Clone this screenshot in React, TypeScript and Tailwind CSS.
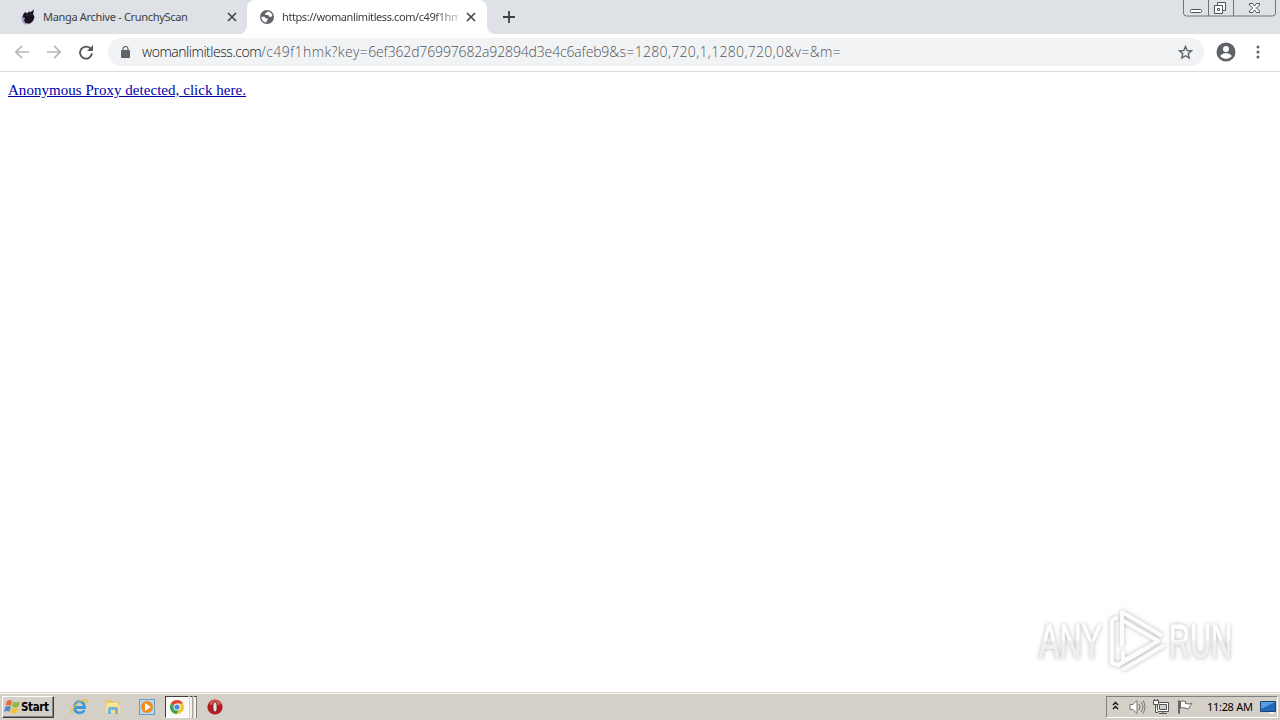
import React from 'react';

const CloseIcon: React.FC = () => (
  <svg width="10" height="10" viewBox="0 0 10 10" fill="none" stroke="#45484c" strokeWidth="1.7">
    <path d="M1 1l8 8M9 1L1 9" />
  </svg>
);

const MangaIcon: React.FC = () => (
  <svg width="16" height="16" viewBox="0 0 16 16">
    <path d="M2.500 6L4 3.500 7 4l2-2 1 1.500L13.500 1 13 5l1.500 3-1.500 4-3.500 3-4 .5-3-2-1-4z" fill="#a99ac8" />
    <path d="M3.500 5.500L5 3l2 1.500L10 2l-.5 2L14 .500 13 5l1.500 3-1.500 4-3 2.500-4.500-.5L4 11.500 5 9 2.500 8z" fill="#17131f" />
    <path d="M6 6l2 .5M9.500 6l2-.5" stroke="#4d4460" strokeWidth=".8" />
  </svg>
);

const GlobeIcon: React.FC = () => (
  <svg width="14" height="14" viewBox="0 0 14 14">
    <circle cx="7" cy="7" r="7" fill="#5f6368" />
    <path
      d="M1.5 6.7l3 .1 1.1 1.4 2 .2.3 1.4-1.3 1.1.1 1.4C3.5 12.5 1.2 9.8 1.5 6.7zM7.1 1.6L6.4 3 4.8 3.8l.4 1.2 3 .1.8 1.5 1.4.3 1.9-.8C12.3 3.7 10 1.4 7.1 1.6z"
      fill="#fff"
    />
  </svg>
);

const Tabs: React.FC = () => (
  <div className="flex h-[34px] bg-[#dee1e6] font-['Noto_Sans',sans-serif] text-[11px] text-[#3c4043]">
    <div className="flex w-[247px] items-center pl-5">
      <MangaIcon />
      <span className="ml-[7px] w-[184px] whitespace-nowrap tracking-[-0.32px]">Manga Archive - CrunchyScan</span>
      <CloseIcon />
    </div>
    <div className="relative flex w-60 items-center rounded-t-lg bg-white pl-[13px]">
      <svg className="absolute -left-2 bottom-0" width="8" height="8">
        <path d="M8 0v8H0a8 8 0 0 0 8-8z" fill="#fff" />
      </svg>
      <svg className="absolute -right-2 bottom-0" width="8" height="8">
        <path d="M0 0v8h8a8 8 0 0 1-8-8z" fill="#fff" />
      </svg>
      <GlobeIcon />
      <span className="ml-2 w-44 whitespace-nowrap tracking-[-0.42px] [mask-image:linear-gradient(to_right,black_152px,transparent_184px)]">
        https://womanlimitless.com/c49f1hm
      </span>
      <span className="ml-2"><CloseIcon /></span>
    </div>
    <svg className="mt-[11px] ml-4" width="12" height="12" fill="none" stroke="#3c4043" strokeWidth="1.8">
      <path d="M6 0v12M0 6h12" />
    </svg>
    <svg className="ml-auto" width="98" height="18" fill="none" stroke="#70747c">
      <path d="M1.500 0v13q0 3 3 3h86q3 0 3-3V0M26.500 0v16M51.500 0v16" />
      <g stroke="#50545a" fill="#fff">
        <rect x="8.500" y="9.500" width="11" height="3" rx="1" />
        <path d="M35.500 2.500h8v8h-3v3h-8v-8h3z" />
        <path d="M35.500 5.500h5v5M35.500 8.500h2v2h-2z" fill="none" />
        <path d="M67.500 3.500h3l2 2.500 2-2.500h3v1.500l-3 3 3 3v1.500h-3l-2-2.500-2 2.500h-3v-1.500l3-3-3-3z" />
      </g>
    </svg>
  </div>
);

const Toolbar: React.FC = () => (
  <div className="flex h-[38px] items-center border-b border-[#d9dbde] bg-white pb-px pl-[14px]">
    <svg width="80" height="16" viewBox="0 0 80 16" fill="none" stroke="#b5b7ba" strokeWidth="1.7">
      <path d="M15 8H2M8 1.800L1.800 8 8 14.200M33 8h13M40 1.800L46.200 8 40 14.200" />
      <path d="M77 5.200A6 6 0 1 0 78 9.400" stroke="#55585c" strokeWidth="1.900" />
      <path d="M79 1v6h-6z" fill="#55585c" stroke="none" />
    </svg>
    <div className="ml-[14px] flex h-7 w-[1096px] items-center rounded-full bg-[#f1f3f4] pl-[13px]">
      <svg width="9" height="12" viewBox="0 0 9 12">
        <rect y="4" width="9" height="8" rx="1" fill="#5f6368" />
        <path d="M2 4.500V3a2.500 2.500 0 0 1 5 0v1.500" fill="none" stroke="#5f6368" strokeWidth="1.200" />
      </svg>
      <div className="ml-3 whitespace-nowrap font-['Open_Sans',sans-serif] text-sm font-light text-[#50545a]">
        <span className="tracking-[-0.46px] text-[#101114]">womanlimitless.com</span>
        <span className="tracking-[0.38px]">/c49f1hmk?key=</span>
        <span className="tracking-[-0.15px]">6ef362d76997682a92894d3e4c6afeb9</span>
        <span className="tracking-[0.32px]">&amp;s=1280,720,1,1280,720,0&amp;v=&amp;m=</span>
      </div>
      <svg className="mr-[11px] ml-auto" width="15" height="15" viewBox="0 0 15 15" fill="none" stroke="#5f6368" strokeWidth="1.400">
        <path d="M7.500 1.500l1.700 4 4.300.4-3.300 2.800 1 4.300-3.700-2.300L3.800 13l1-4.300-3.300-2.800 4.300-.4z" />
      </svg>
    </div>
    <svg className="ml-3" width="20" height="20" viewBox="0 0 20 20">
      <circle cx="10" cy="10" r="9.500" fill="#5f6368" />
      <circle cx="10" cy="7" r="3" fill="#fff" />
      <path d="M4 14q2.500-3 6-3t6 3q-2.500 3-6 3t-6-3z" fill="#fff" />
    </svg>
    <svg className="ml-5" width="4" height="14" fill="#5f6368">
      <circle cx="2" cy="2" r="1.500" />
      <circle cx="2" cy="7" r="1.500" />
      <circle cx="2" cy="12" r="1.500" />
    </svg>
  </div>
);

const Watermark: React.FC = () => (
  <svg
    className="absolute right-[30px] bottom-3 overflow-visible drop-shadow-[0_0_2px_rgba(0,0,0,0.28)]"
    width="230"
    height="80"
    viewBox="0 0 230 80"
  >
    <defs>
      <linearGradient id="fade" x1="0" y1="0" x2="0" y2="80" gradientUnits="userSpaceOnUse">
        <stop offset=".5" stopColor="#fff" />
        <stop offset=".52" stopColor="#f0f0f0" />
        <stop offset="1" stopColor="#eee" />
      </linearGradient>
    </defs>
    <g fill="url(#fade)" stroke="url(#fade)" strokeWidth="1" fontFamily="Liberation Sans Narrow, Liberation Sans, sans-serif" fontSize="49">
      <text x="19" y="58" textLength="63" lengthAdjust="spacingAndGlyphs">ANY</text>
      <text x="149" y="58" textLength="63" lengthAdjust="spacingAndGlyphs">RUN</text>
    </g>
    <g fill="none" stroke="#fcfcfc" strokeWidth="4" strokeLinejoin="round" strokeLinecap="round">
      <path d="M102 45V12l39 23" />
      <path d="M102 20l36 21-35 20v-8" />
      <path d="M96 18l-4 2v43l6 2 31-18" />
      <path d="M104 69l39-23" />
    </g>
  </svg>
);

const WindowsFlag: React.FC = () => (
  <svg width="17" height="16" viewBox="0 0 17 16">
    <path d="M3 2q3-2 5 0L7 7Q4 5 1.500 7z" fill="#e96b38" />
    <path d="M9 2.500q3 2 7 0l-1.500 5q-3 2-6.500 0z" fill="#8cbb40" />
    <path d="M1.200 8q3-2 5.500 0l-1.500 5Q3 11 0 13z" fill="#508ccc" />
    <path d="M7.700 8.500q3 2 6.500 0l-1.500 5q-3 2-6.500 0z" fill="#f4c232" />
  </svg>
);

const Taskbar: React.FC = () => (
  <div className="flex h-7 items-center border-t border-[#d4d0c8] bg-[#d4d0c8] pl-0.5 shadow-[inset_0_1px_0_#fff]">
    <div className="mt-px flex h-[22px] w-[52px] items-center border border-t-white border-r-[#404040] border-b-[#404040] border-l-white pl-px font-['DejaVu_Sans_Condensed','DejaVu_Sans',sans-serif] text-[11.5px] font-bold tracking-[-0.35px] text-black shadow-[inset_-1px_-1px_0_#808080]">
      <WindowsFlag />
      <span className="pt-px">Start</span>
    </div>
    <svg className="ml-4" width="18" height="18" viewBox="0 0 18 18" fill="none">
      <path d="M4.500 9.500h10c0-8-10-7.500-10 0 0 7 8.500 6.500 9.600 2.500" stroke="#399bd7" strokeWidth="2.800" />
      <path d="M2.500 15.500C-1 13 7 4 13.500 2c4-1.200 3.500 2 2.500 3.500" stroke="#e8bd3c" strokeWidth="1.300" />
    </svg>
    <svg className="ml-[17px]" width="16" height="18" viewBox="0 0 16 18">
      <path d="M1 3l1-1h5l1 2h7v11H1z" fill="#e9c764" />
      <path d="M2 5h11v3H2z" fill="#f9ecaf" />
      <path d="M1 7h14v8H1z" fill="#f7df8b" />
      <path d="M3 16v-5q0-2 2-2h6q2 0 2 2v5h-3v-4H6v4z" fill="#71b5dc" />
    </svg>
    <svg className="ml-[18px]" width="16" height="16" viewBox="0 0 16 16">
      <rect x=".5" y=".5" width="15" height="15" fill="#b7d9ec" stroke="#6c9bbf" />
      <circle cx="8" cy="8" r="6" fill="#f18b20" />
      <path d="M6 4l6 4-6 4z" fill="#fff" />
    </svg>
    <div className="ml-[10px] flex h-[22px] w-6 items-center justify-center border border-t-[#404040] border-r-white border-b-white border-l-[#404040] bg-[#faf9f7]">
      <svg width="16" height="16" viewBox="0 0 16 16">
        <circle cx="8" cy="8" r="7" fill="#f5c431" />
        <path d="M8 8L1.900 4.500A7 7 0 0 1 14.100 4.500H8z" fill="#df463a" />
        <path d="M8 8l-6.100-3.500A7 7 0 0 0 7.500 15L11 9z" fill="#3ba757" />
        <circle cx="8" cy="8" r="3.500" fill="#fff" />
        <circle cx="8" cy="8" r="2.600" fill="#4b84df" />
      </svg>
    </div>
    <div className="ml-px h-[22px] w-[3px] border-t border-r border-t-[#404040] border-r-[#a8a49c] bg-[#f4f2ee]" />
    <div className="ml-px h-[22px] w-[3px] border-t border-r border-t-[#404040] border-r-[#808080] bg-[#f4f2ee]" />
    <svg className="ml-[10px]" width="16" height="16" viewBox="0 0 16 16">
      <circle cx="8" cy="8" r="7.600" fill="#b51e20" />
      <path d="M2 5Q4 1 8 1t6 4q-6 3-12 0z" fill="#d45b57" />
      <ellipse cx="8" cy="8" rx="2.200" ry="5.200" fill="#e8dddd" stroke="#721416" />
    </svg>
    <div className="mt-px mr-[2px] ml-auto flex h-[22px] w-[172px] items-center border border-t-[#808080] border-r-white border-b-white border-l-[#808080] pl-[5px]">
      <svg className="-mt-[3px]" width="7" height="9" fill="none" stroke="#111" strokeWidth="1.400">
        <path d="M1 4l2.500-2.500L6 4M1 8l2.500-2.500L6 8" />
      </svg>
      <svg className="ml-[10px]" width="17" height="16" viewBox="0 0 17 16" fill="none" stroke="#777">
        <path d="M1 5.500h3l4-4v13l-4-4H1z" fill="#fff" />
        <path d="M10 5q2 3 0 6M12 3q4 5 0 10M14 1.500q4 6.500 0 13" />
      </svg>
      <svg className="ml-[7px]" width="16" height="16" viewBox="0 0 16 16" fill="#fff" stroke="#555">
        <path d="M4.500 3.500h11v9h-11z" />
        <path d="M6.500 5.500h7v5h-7z" fill="#ccc" />
        <path d="M6 14.500h8M10 12.500v2" />
        <path d="M.500 1.500h5v4h-5zM2.500 5.500v8H5" />
        <path d="M1.500 0v2M4.500 0v2" />
      </svg>
      <svg className="ml-2" width="16" height="16" viewBox="0 0 16 16" fill="#fff" stroke="#666">
        <path d="M1.500 1.500h1v13h-1zM3.500 2.500q3-1 5 0v2q3 1 6.500 0-2 2-3 5-2 1-4-.5-2-.5-4.500 0z" />
      </svg>
      <span className="ml-[14px] w-[52px] whitespace-nowrap font-['Noto_Sans',sans-serif] text-[11px] tracking-[-0.3px] text-black">11:28 AM</span>
      <svg className="ml-px" width="17" height="15" viewBox="0 0 17 15">
        <path d="M.500 1.500h15v10H.500z" fill="#2468bd" stroke="#174574" />
        <path d="M1 2h14L1 9z" fill="#5a9ce3" />
        <path d="M9 12h5v2H9z" fill="#eee" />
      </svg>
    </div>
  </div>
);

const App: React.FC = () => {
  return (
    <div className="flex h-screen w-screen flex-col overflow-hidden bg-white">
      <Tabs />
      <Toolbar />
      <main className="relative flex-1 bg-white px-2 pt-[5px]">
        <a href="#" className="font-['Liberation_Serif',serif] text-[15px] tracking-[0.04px] text-[#0000a8] underline">
          Anonymous Proxy detected, click here.
        </a>
        <Watermark />
      </main>
      <Taskbar />
    </div>
  );
};

export default App;
